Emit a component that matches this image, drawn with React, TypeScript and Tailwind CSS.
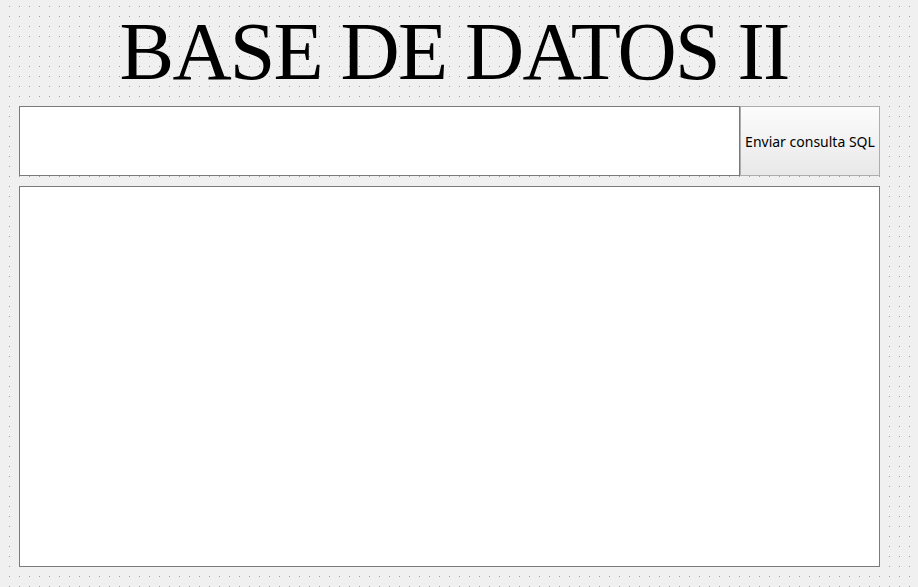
export default function App() {
  return (
    <div className="w-full h-[587px] bg-[#f0f0f0] bg-[linear-gradient(to_bottom,transparent_1px,#f0f0f0_1px),linear-gradient(to_right,#a0a0a0_1px,#f0f0f0_1px)] [background-size:10px_10px] [background-position:9px_6px] overflow-hidden">
      <div className="flex flex-col pt-[11px] pl-[19px] w-[880px]">
        <h1 className="h-[82px] leading-[82px] text-[82px] text-black text-center font-normal tracking-[-1.8px] pl-[9px] [font-family:'Liberation_Serif',serif] whitespace-nowrap">
          BASE DE DATOS II
        </h1>
        <div className="flex mt-[13px] h-[70px] w-[861px]">
          <input
            className="w-[721px] h-[70px] bg-white border border-[#7a7a7a] outline-none"
            type="text"
          />
          <button className="w-[140px] h-[70px] border border-[#adadad] bg-[linear-gradient(to_bottom,#fcfcfc,#e8e8e8)] text-[14px] text-black [font-family:'Noto_Sans',sans-serif] flex items-center justify-center whitespace-nowrap">
            Enviar consulta SQL
          </button>
        </div>
        <textarea className="mt-[10px] w-[861px] h-[381px] bg-white border border-[#7a7a7a] outline-none resize-none" />
      </div>
    </div>
  );
}
